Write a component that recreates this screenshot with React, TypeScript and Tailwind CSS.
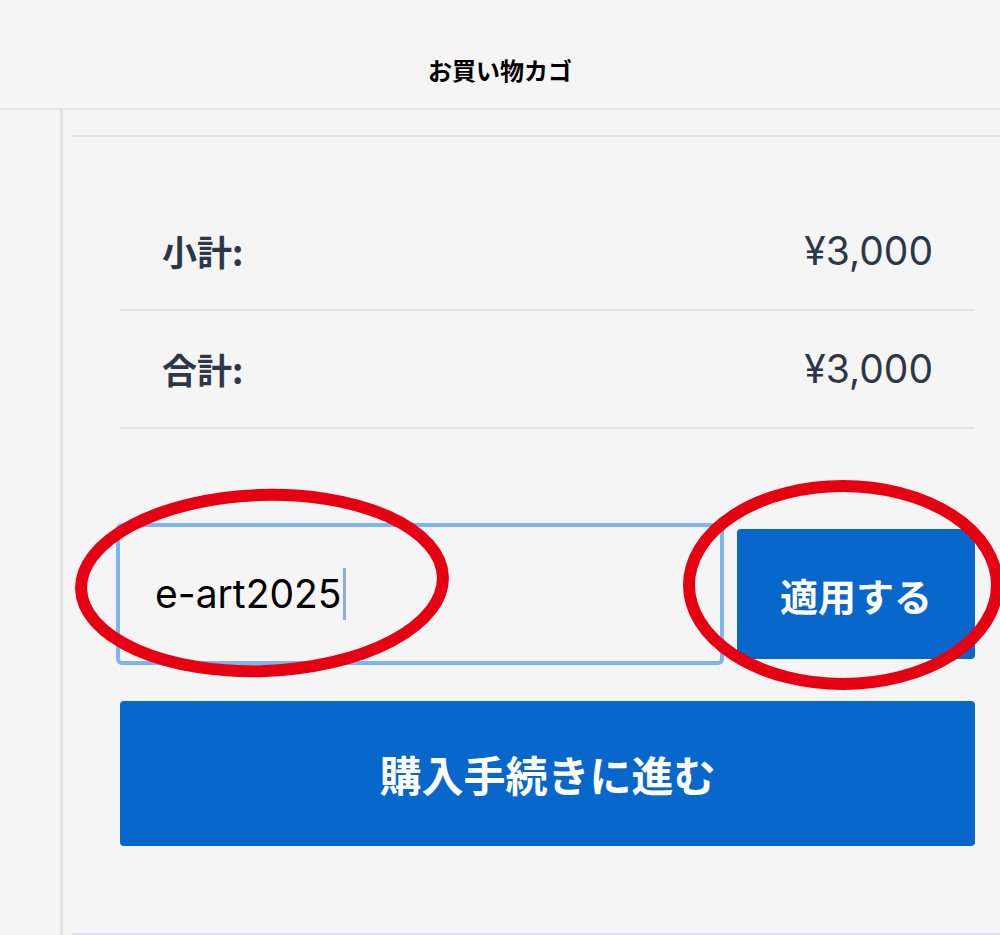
import React from 'react';

const jp = "font-['Noto_Sans_CJK_JP',sans-serif]";

const SummaryRow = ({ label, value }: { label: string; value: string }) => (
  <div className="flex h-[118px] items-center justify-between border-b-2 border-[#e2e2e2] px-[42px]">
    <span className={`${jp} text-[35px] font-bold text-[#2d3748]`}>{label}</span>
    <span className="font-['Inter',sans-serif] text-[39px] text-[#2d3748]">{value}</span>
  </div>
);

const App: React.FC = () => {
  return (
    <div className="relative h-[935px] w-[1000px] overflow-hidden bg-[#f5f5f5]">
      {/* Header */}
      <header className="flex h-[110px] items-center justify-center border-b-2 border-[#e6e6e6] pt-[32px]">
        <h1 className={`${jp} text-[24px] font-bold text-black`}>お買い物カゴ</h1>
      </header>

      <div className="flex h-[825px]">
        <div className="w-[60px] shrink-0" />
        <div className="flex flex-1 flex-col border-l-[3px] border-[#e2e2e2]">
          <div className="h-[25px]" />
          <div className="ml-[9px] flex-1 border-t-2 border-b-2 border-t-[#e3e3e3] border-b-[#e4e2f0]">
            <div className="ml-[48px] mr-[25px] pt-[56px]">
              <SummaryRow label="小計:" value="¥3,000" />
              <SummaryRow label="合計:" value="¥3,000" />

              {/* Coupon */}
              <div className="mt-[94px] flex items-center gap-[13px]">
                <div className="-ml-[4px] flex h-[142px] flex-1 items-center rounded-md border-4 border-[#7db4f2] bg-[#f5f5f5] pl-[35px]">
                  <span className="font-['Inter',sans-serif] text-[39px] text-black">e-art2025</span>
                  <span className="ml-[1px] h-[52px] w-[3px] bg-[#8fa6e8]" />
                </div>
                <button className={`${jp} flex h-[130px] w-[238px] items-center justify-center rounded-[4px] bg-[#0767cb] text-[38px] font-bold text-white`}>
                  適用する
                </button>
              </div>

              <button className={`${jp} mt-[36px] flex h-[145px] w-full items-center justify-center rounded-[4px] bg-[#0767cb] text-[42px] font-bold text-white`}>
                購入手続きに進む
              </button>
            </div>
          </div>
        </div>
      </div>

      {/* Annotation overlay */}
      <svg className="pointer-events-none absolute inset-0" width="1000" height="935" viewBox="0 0 1000 935">
        <ellipse cx="262" cy="583" rx="181" ry="88" fill="none" stroke="#e60012" strokeWidth="12" transform="rotate(-2 262 583)" />
        <ellipse cx="843" cy="585" rx="154" ry="99" fill="none" stroke="#e60012" strokeWidth="12" />
      </svg>
    </div>
  );
};

export default App;
